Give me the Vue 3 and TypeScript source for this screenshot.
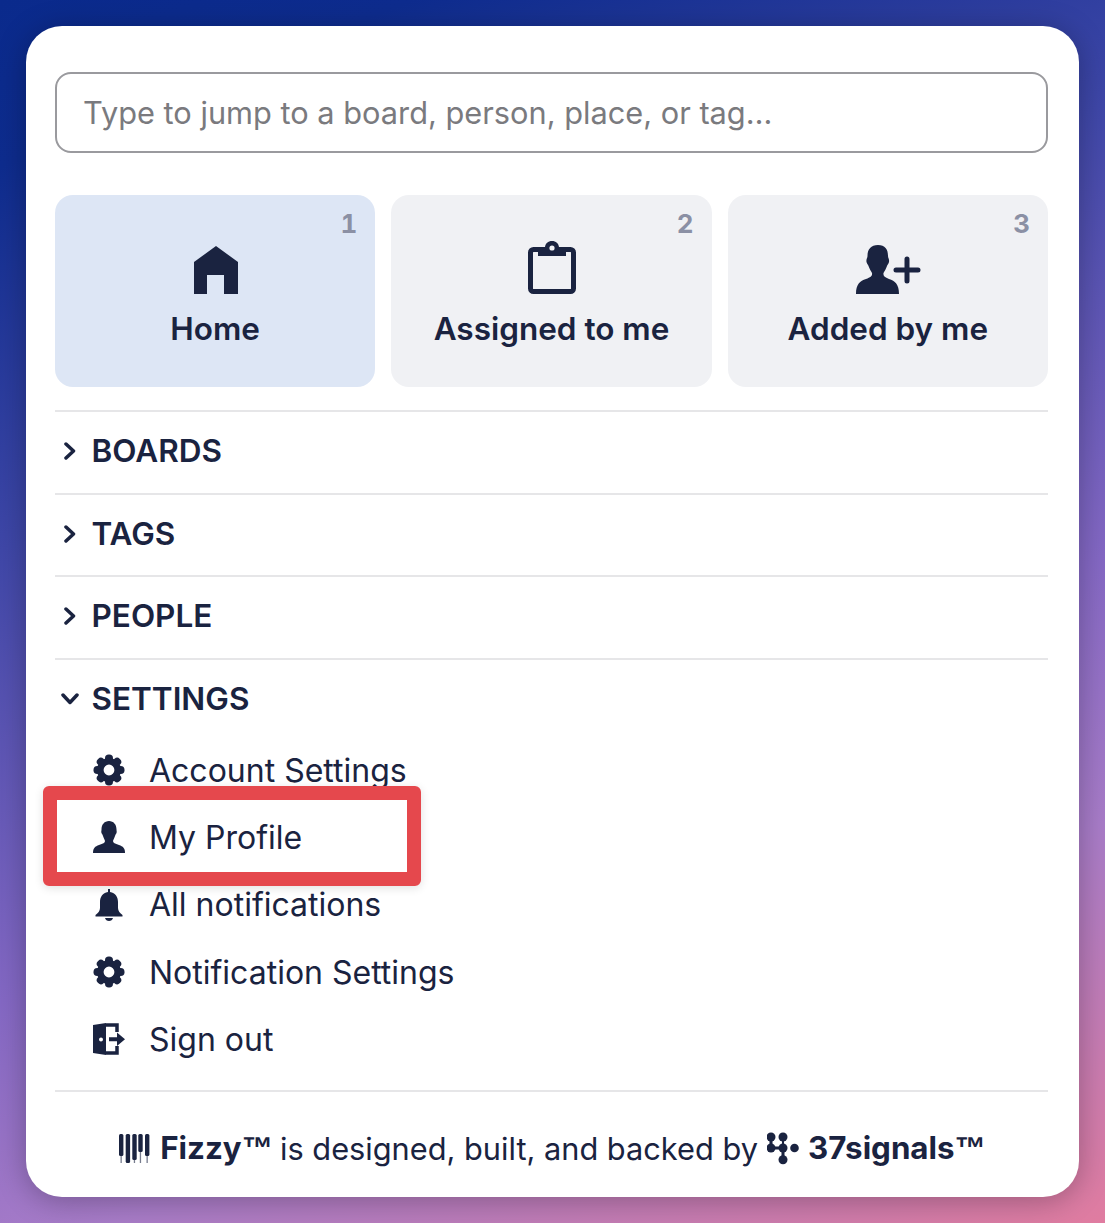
<script setup lang="ts">
const tiles = [
  { key: 'home', label: 'Home', hotkey: 1, active: true },
  { key: 'assigned', label: 'Assigned to me', hotkey: 2, active: false },
  { key: 'added', label: 'Added by me', hotkey: 3, active: false },
]

const closedSections = ['BOARDS', 'TAGS', 'PEOPLE']

const settings = [
  { key: 'gear', label: 'Account Settings' },
  { key: 'person', label: 'My Profile', marked: true },
  { key: 'bell', label: 'All notifications' },
  { key: 'gear', label: 'Notification Settings' },
  { key: 'exit', label: 'Sign out' },
]

// gear outline, 8 rounded teeth
const teeth = [0, 45, 90, 135, 180, 225, 270, 315]
const pianoKeys = [
  { x: 0, h: 22 },
  { x: 6.7, h: 29 },
  { x: 13.3, h: 26 },
  { x: 19.3, h: 18 },
  { x: 26, h: 22 },
]
</script>

<template>
  <div class="page">
    <div class="panel">
      <input class="search" type="text" placeholder="Type to jump to a board, person, place, or tag…">

      <div class="tiles">
        <div v-for="tile in tiles" :key="tile.key" class="tile" :class="{ active: tile.active }">
          <span class="hotkey">{{ tile.hotkey }}</span>
          <span class="tile-icon">
            <svg v-if="tile.key === 'home'" width="44" height="48" viewBox="0 0 44 48">
              <path d="M22 0 44 16V48H30V29H13V48H0V16Z" />
            </svg>
            <svg v-else-if="tile.key === 'assigned'" width="48" height="53" viewBox="0 0 48 53">
              <rect x="2.500" y="8.500" width="43" height="42" rx="3" class="outline" />
              <path d="M10 6H17C17.500 2.500 20 0 24 0S30.500 2.500 31 6H38V15H10Z" />
              <circle cx="24" cy="7" r="2.600" class="hole" />
            </svg>
            <svg v-else width="65" height="49" viewBox="0 0 65 49">
              <path d="M22 0C29 0 32 4 32 11 32 13 33.500 14 33 17 32.500 19 31.500 19.500 31 21 30 24 28.500 26 27.500 28 27 31 28.500 32 33 34 39 36 43 39 43 49H0C0 39 4 36 10 34 15 32 16.500 31 16 28 15 26 13.500 24 12.500 21 12 19.500 11 19 10.500 17 10 14 11.500 13 11.500 11 11.500 4 15 0 22 0Z" />
              <path d="M40 25H62M51 14V36" class="plus" />
            </svg>
          </span>
          <span class="tile-label">{{ tile.label }}</span>
        </div>
      </div>

      <div v-for="name in closedSections" :key="name" class="section">
        <svg class="chevron" width="12" height="18" viewBox="0 0 12 18">
          <path d="M2 2 9.500 9 2 16" />
        </svg>
        <span class="section-name">{{ name }}</span>
      </div>

      <div class="section open">
        <svg class="chevron" width="18" height="12" viewBox="0 0 18 12">
          <path d="M2 2 9 9.500 16 2" />
        </svg>
        <span class="section-name">SETTINGS</span>
      </div>

      <ul class="menu">
        <li v-for="item in settings" :key="item.label" class="menu-item">
          <span class="menu-icon">
            <svg v-if="item.key === 'gear'" width="32" height="32" viewBox="0 0 32 32">
              <circle cx="16" cy="16" r="8.700" class="ring" />
              <rect v-for="deg in teeth" :key="deg" x="12" y="0.500" width="8" height="7.500" rx="3.800" :transform="`rotate(${deg} 16 16)`" />
            </svg>
            <svg v-else-if="item.key === 'person'" width="32" height="32" viewBox="0 0 32 32">
              <path d="M16 0C20.500 0 23.500 3.500 23.500 8.500 23.500 10 24 10.500 23.500 12 23 13 22.500 13.500 22 15 21.500 17 20.500 18 20 20 20 22 22 22.500 26 24 30 25.500 32 27 32 32H0C0 27 2 25.500 6 24 10 22.500 12 22 12 20 11.500 18 10.500 17 10 15 9.500 13.500 9 13 8.500 12 8 10.500 8.500 10 8.500 8.500 8.500 3.500 11.500 0 16 0Z" />
            </svg>
            <svg v-else-if="item.key === 'bell'" width="28" height="32" viewBox="0 0 28 32">
              <path d="M13 0H15V3C20.500 4 23 8 23 13V19C23 22 25 24 27.500 26V27.500H.5V26C3 24 5 22 5 19V13C5 8 7.500 4 13 3ZM10 29H18C17.500 31 16 32 14 32S10.500 31 10 29Z" />
            </svg>
            <svg v-else width="32" height="32" viewBox="0 0 32 32">
              <path d="M0 2 13 0V32L0 30ZM8 14.500A2 2 0 1 0 8 18.500 2 2 0 0 0 8 14.500Z" fill-rule="evenodd" />
              <path d="M13 2H24V9M24 23V30H13" class="door" />
              <path d="M16 14.300H24V9.500L32 16.300 24 23V18.300H16Z" />
            </svg>
          </span>
          <span>{{ item.label }}</span>
          <span v-if="item.marked" class="marker"></span>
        </li>
      </ul>

      <div class="footer">
        <svg class="piano" width="31" height="29" viewBox="0 0 31 29">
          <g v-for="k in pianoKeys" :key="k.x">
            <rect :x="k.x + 1.500" y="0" width="1.300" height="29" class="leg" />
            <rect :x="k.x" y="0" width="4.400" :height="k.h" rx="1.500" />
          </g>
        </svg>
        <strong class="product">Fizzy<span class="tm">™</span></strong>
        <span>is designed, built, and backed by</span>
        <svg class="signals" width="33" height="33" viewBox="0 0 33 33">
          <path d="M4 5V16H16V27.700" class="link" />
          <path d="M16 5V16" class="neck" />
          <circle cx="4" cy="5" r="4.500" />
          <circle cx="16" cy="5" r="4.500" />
          <circle cx="4" cy="16" r="4.500" />
          <circle cx="16" cy="16" r="4.500" />
          <circle cx="27.500" cy="16" r="4.300" />
          <circle cx="16" cy="27.700" r="4.500" />
        </svg>
        <strong class="maker">37signals<span class="tm">™</span></strong>
      </div>
    </div>
  </div>
</template>

<style>
html, body { margin: 0; }
</style>

<style scoped>
.page {
  box-sizing: border-box;
  width: 1105px;
  height: 1223px;
  padding: 26px;
  background: linear-gradient(158deg, #0a2a8c 0%, #0e2c8e 10%, #3f47a8 33%, #8468c4 60%, #a87cc8 76%, #e07ca0 100%);
  font-family: Inter, "Liberation Sans", sans-serif;
  color: #1a2340;
}

.panel {
  box-sizing: border-box;
  height: 1171px;
  padding: 46px 31px 0 29px;
  background: #fff;
  border-radius: 36px;
  box-shadow: 0 4px 30px rgba(0, 0, 0, 0.28);
}

.search {
  display: block;
  box-sizing: border-box;
  width: 100%;
  height: 81px;
  padding: 0 26px;
  border: 2px solid #9a9a9e;
  border-radius: 16px;
  font: 400 30.750px Inter, sans-serif;
  color: #1a2340;
  outline: none;
}
.search::placeholder { color: #7a7a7e; opacity: 1; }

.tiles {
  display: grid;
  grid-template-columns: repeat(3, 1fr);
  gap: 16px;
  margin-top: 42px;
  padding-bottom: 23px;
}

.tile {
  position: relative;
  display: flex;
  flex-direction: column;
  align-items: center;
  height: 192px;
  padding-top: 46px;
  box-sizing: border-box;
  background: #f0f1f4;
  border-radius: 18px;
}
.tile.active { background: #dde6f5; }

.hotkey {
  position: absolute;
  top: 13px;
  right: 18px;
  font-size: 26px;
  font-weight: 700;
  line-height: 32px;
  color: #8b90a4;
  font-variant-numeric: tabular-nums;
}

.tile-icon { display: flex; align-items: flex-end; height: 53px; margin-left: 2px; }
.tile-icon svg { fill: #1a2340; display: block; }
.tile-icon .outline { fill: none; stroke: #1a2340; stroke-width: 5; }
.tile-icon .hole { fill: #f0f1f4; }
.tile-icon .plus { fill: none; stroke: #1a2340; stroke-width: 5; stroke-linecap: round; }

.tile-label {
  margin-top: 16px;
  font-size: 31.500px;
  font-weight: 600;
  line-height: 38px;
}

.section {
  display: flex;
  align-items: center;
  height: 82.500px;
  box-sizing: border-box;
  padding-bottom: 2px;
  border-top: 2px solid #e6e6e8;
}
.section.open { height: 79px; padding: 1px 0 0; }

.chevron { width: 18px; flex: none; margin-right: 12.500px; margin-left: 6px; }
.chevron path { fill: none; stroke: #1a2340; stroke-width: 3.500; stroke-linecap: round; stroke-linejoin: round; }

.section-name {
  font-size: 31.500px;
  font-weight: 600;
  line-height: 38px;
}

.menu {
  list-style: none;
  margin: 0;
  padding: 0 0 17px;
  border-bottom: 2px solid #e6e6e8;
}

.menu-item {
  position: relative;
  display: flex;
  align-items: center;
  gap: 24px;
  height: 67.300px;
  padding-left: 38px;
  font-size: 32px;
  font-weight: 400;
}

.menu-icon { display: flex; justify-content: center; width: 32px; flex: none; }
.menu-icon svg { fill: #1a2340; }
.menu-icon .ring { fill: #fff; stroke: #1a2340; stroke-width: 6.600; }
.menu-icon .door { fill: none; stroke: #1a2340; stroke-width: 3.500; }

.marker {
  position: absolute;
  left: -12px;
  top: -18px;
  width: 378px;
  height: 100px;
  box-sizing: border-box;
  border: 14px solid #e5484d;
  border-radius: 6px;
  box-shadow: 0 2px 10px rgba(0, 0, 0, 0.12);
}

.footer {
  display: flex;
  align-items: center;
  justify-content: center;
  gap: 9px;
  height: 113px;
  padding-left: 2px;
  font-size: 30.750px;
}
.footer strong { font-size: 31.300px; font-weight: 700; white-space: nowrap; }
.footer .product { margin-right: -2px; margin-left: 1px; }
.footer .maker { margin-left: -1px; }
.footer .tm { font-family: "Liberation Sans", sans-serif; }
.piano { fill: #1a2340; flex: none; }
.piano .leg { fill: #777c8e; }
.signals { fill: #1a2340; flex: none; }
.signals .link { fill: none; stroke: #1a2340; stroke-width: 3; }
.signals .neck { fill: none; stroke: #1a2340; stroke-width: 2; }
</style>
